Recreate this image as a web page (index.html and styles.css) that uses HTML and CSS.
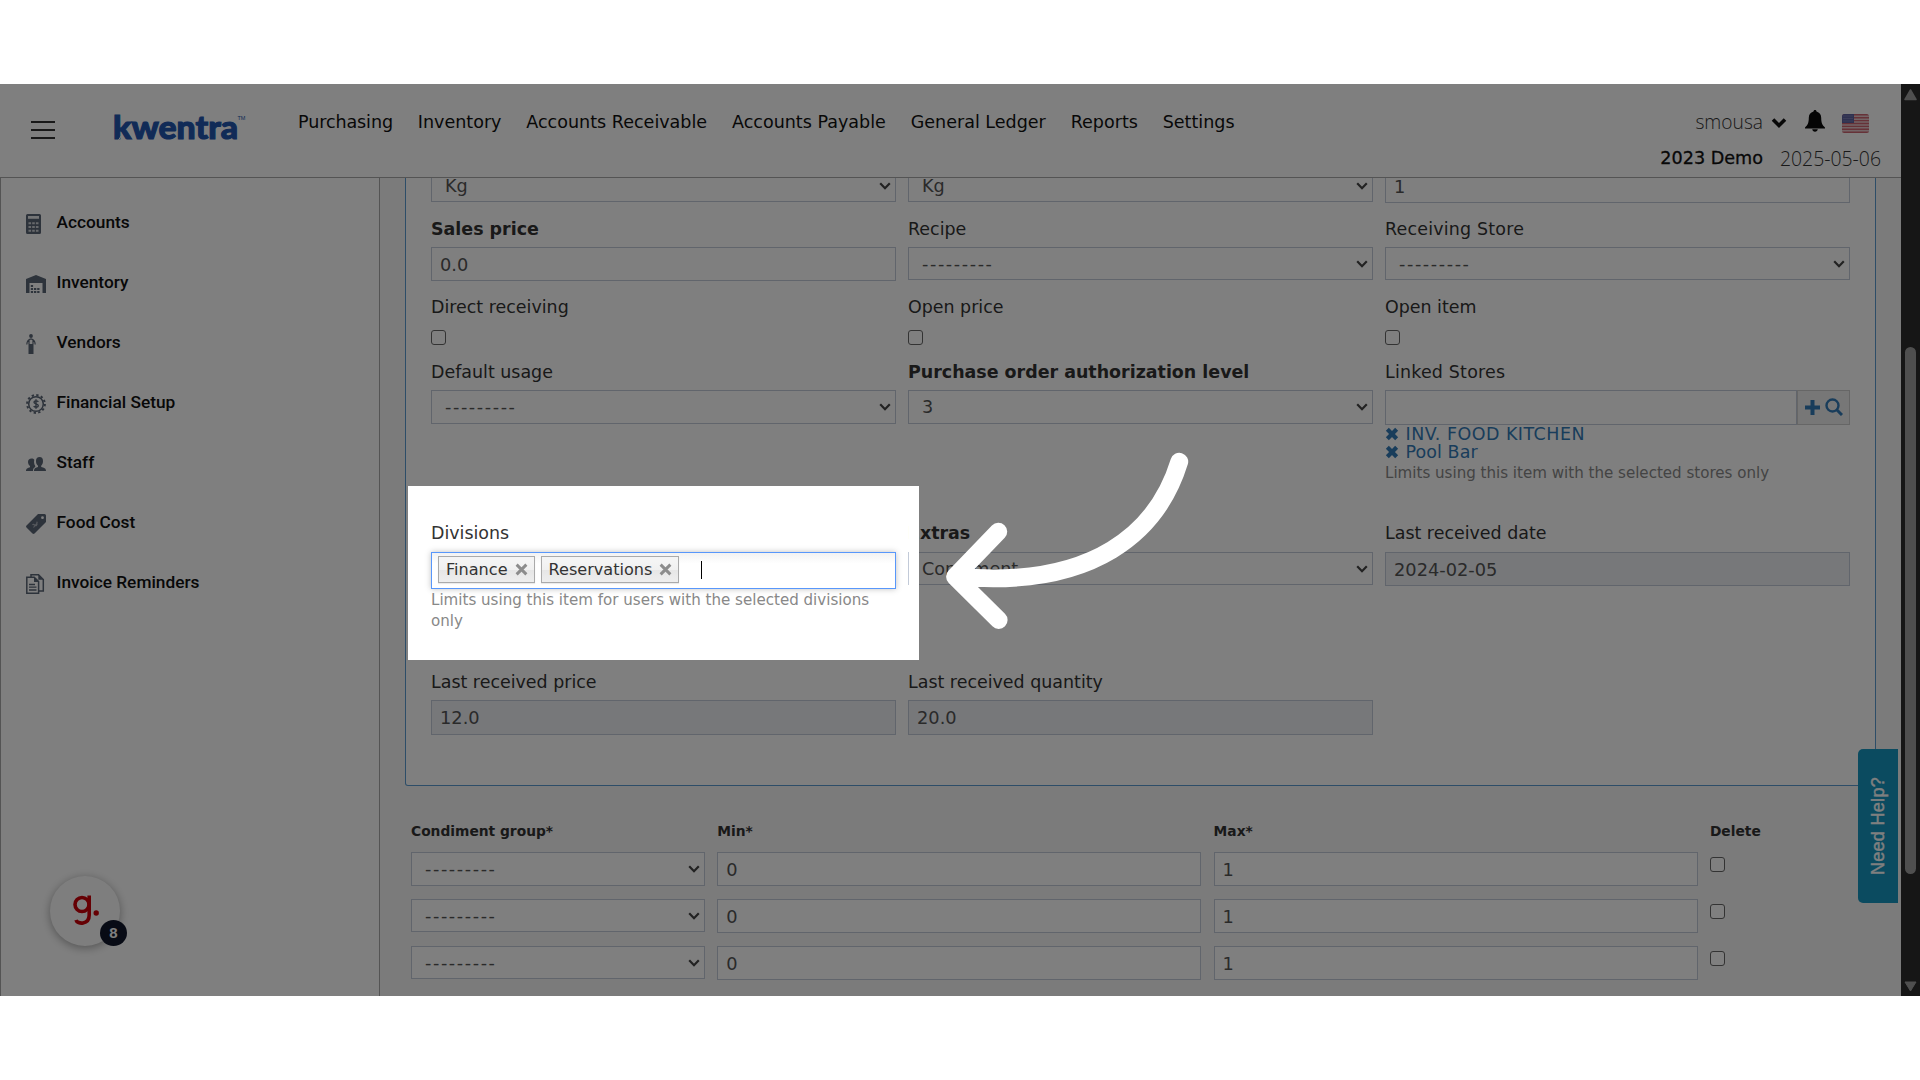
FILE: index.html
```html
<!DOCTYPE html>
<html lang="en">
<head>
<meta charset="utf-8">
<title>Kwentra</title>
<link rel="stylesheet" href="styles.css">
</head>
<body>
<svg class="defs" width="0" height="0">
  <symbol id="chev" viewBox="0 0 12 8"><path d="M1.2 1.2 6 6.2l4.800-5" fill="none" stroke="currentColor" stroke-width="2.2"/></symbol>
  <symbol id="cross" viewBox="0 0 12 12"><path d="M2 2l8 8M10 2l-8 8" fill="none" stroke="currentColor" stroke-width="3.600"/></symbol>
  <symbol id="x" viewBox="0 0 12 12"><path d="M1.500 1.500l9 9M10.500 1.500l-9 9" fill="none" stroke="currentColor" stroke-width="2.700"/></symbol>
</svg>
<div class="app">
  <div class="page">
    <header class="header">
      <div class="burger"><i></i><i></i><i></i></div>
      <svg class="logo" width="136" height="32" viewBox="0 0 136 32">
        <text class="logo-word" x="0" y="26" textLength="125" lengthAdjust="spacingAndGlyphs">kwentra</text>
        <text class="logo-tm" x="124.500" y="7">TM</text>
        <path d="M5.500 27 8.500 22.500 11.500 27" fill="none" stroke="#fff" stroke-width="1"/>
      </svg>
      <nav class="nav">
        <a class="tight">Purchasing</a><a>Inventory</a><a>Accounts Receivable</a><a>Accounts Payable</a><a>General Ledger</a><a>Reports</a><a>Settings</a>
      </nav>
      <div class="account">
        <div class="account-row">
          <span class="thin user">smousa</span>
          <svg class="user-chev" width="16" height="12" viewBox="0 0 16 12"><path d="M2 2.500 8 8.500l6-6" fill="none" stroke="#111" stroke-width="3.600"/></svg>
          <svg class="bell" width="20" height="22" viewBox="0 0 20 22"><path d="M10 0c1 0 1.500.7 1.500 1.600 3 .8 4.700 3.200 4.700 6.200 0 5 1.200 7.500 3.800 9.700v1H0v-1c2.600-2.200 3.800-4.700 3.800-9.700 0-3 1.700-5.400 4.700-6.200C8.500.7 9 0 10 0zM7.200 19.200h5.600C12.600 20.800 11.500 21.700 10 21.700s-2.600-.9-2.800-2.500z" fill="#0b0b0b"/></svg>
          <svg class="flag" width="27" height="19" viewBox="0 0 27 19"><defs><clipPath id="fc"><rect width="27" height="19" rx="2.500"/></clipPath></defs><g clip-path="url(#fc)"><rect width="27" height="19" fill="#e6c8cc"/><path d="M0 .7h27M0 3.700h27M0 6.600h27M0 9.500h27M0 12.400h27M0 15.300h27M0 18.300h27" stroke="#cc6571" stroke-width="1.400"/><rect width="12" height="9" fill="#5e62a0"/><path d="M1.500 2h10M1.500 4.500h10M1.500 7h10" stroke="#9296c4" stroke-width="1" stroke-dasharray="1 1"/></g></svg>
        </div>
        <div class="account-row second"><span class="demo">2023 Demo</span><span class="thin date">2025-05-06</span></div>
      </div>
    </header>
    <div class="body">
      <aside class="side">
        <a class="side-item"><svg width="20" height="20" viewBox="0 0 20 20"><path d="M1.500 0h12A1.500 1.500 0 0 1 15 1.500v17a1.500 1.500 0 0 1-1.500 1.500h-12A1.500 1.500 0 0 1 0 18.500v-17A1.500 1.500 0 0 1 1.500 0z" fill="#5b6676"/><path d="M2 2h11v2.800H2z" fill="#e8eaec"/><path d="M2.500 9.200h10M2.500 13h10M2.500 16.700h10" stroke="#cfd3d8" stroke-width="2" stroke-dasharray="2.600 1.100"/></svg><span>Accounts</span></a>
        <a class="side-item"><svg width="20" height="20" viewBox="0 0 20 20"><path d="M0 19V5L10 1l10 4v14h-3.500V9H3.500v10z" fill="#5b6676"/><path d="M4.800 12h3M4.800 15h8.800M4.800 18h8.800" stroke="#5b6676" stroke-width="2.200" stroke-dasharray="2.300 .9"/></svg><span>Inventory</span></a>
        <a class="side-item"><svg width="20" height="20" viewBox="0 0 20 20"><circle cx="5" cy="2" r="1.900" fill="#5b6676"/><path d="M2.500 10h5v10h-5z" fill="#5b6676"/><path d="M5 4.800C2 5.300 1 7 .8 10.500M5 4.800C8 5.300 9 7 9.200 10.500M3 6v4M7 6v4" fill="none" stroke="#5b6676" stroke-width="1.200"/></svg><span>Vendors</span></a>
        <a class="side-item"><svg width="20" height="20" viewBox="0 0 20 20"><circle cx="10" cy="10" r="7.300" fill="none" stroke="#5b6676" stroke-width="1.500"/><circle cx="10" cy="10" r="8.900" fill="none" stroke="#5b6676" stroke-width="2" stroke-dasharray="2.300 2.360"/><path d="M12.300 7.800C11.500 6.500 8 6.500 8 8.300s4.300 1.500 4.300 3.400-3.600 2-4.600.4M10 5.300v9.400" fill="none" stroke="#5b6676" stroke-width="1.400"/></svg><span>Financial Setup</span></a>
        <a class="side-item"><svg width="20" height="20" viewBox="0 0 20 20"><path d="M7 17H0c0-2.800 2-3 4-3.800V12C2.700 11 2 9.500 2 8c0-2 1.300-3.500 3.500-3.500 1.300 0 2.300.5 2.800 1.200-.5 2-.3 4.300.9 6v1.200C7.500 13.700 7 15 7 17z" fill="#5b6676"/><path d="M8 17c0-3 2-3.400 4-4v-1.300C10.500 10.500 10 9 10 7c0-2.500 1.300-4 3.600-4S17 4.500 17 7c0 2-.6 3.500-1.800 4.700V13c2.500.7 4.800 1 4.800 4z" fill="#5b6676"/></svg><span>Staff</span></a>
        <a class="side-item"><svg width="20" height="20" viewBox="0 0 20 20"><path fill-rule="evenodd" d="M12 0h6.500A1.500 1.500 0 0 1 20 1.500V8L8.500 19.500a1.500 1.500 0 0 1-2 0l-6-6a1.500 1.500 0 0 1 0-2zm4.500 2.300a1.400 1.400 0 1 0 0 2.800 1.400 1.400 0 0 0 0-2.800z" fill="#5b6676"/><path d="M6.500 11c1.500-2 2.500 1.800 4 .3s-.5-3 .8-3.500M7.500 13.500l4-5" stroke="#aab0b8" fill="none" stroke-width="1.200"/></svg><span>Food Cost</span></a>
        <a class="side-item"><svg width="20" height="20" viewBox="0 0 20 20"><path d="M5 3V.800h7.500L17.300 5.500V17H13" fill="none" stroke="#5b6676" stroke-width="1.500"/><path d="M.8 3.200h7.400L12.600 7.500v11.700H.8z" fill="none" stroke="#5b6676" stroke-width="1.500"/><path d="M8 3v5h4.800zM12.300.8v5h5z" fill="#5b6676"/><path d="M3 10.500h6M3 13.200h7.500M3 16h7.500" stroke="#5b6676" stroke-width="1.300"/></svg><span>Invoice Reminders</span></a>
      </aside>
      <main class="main">
        <section class="panel">
          <div class="field first"><div class="ctl sel short">Kg<svg><use href="#chev"/></svg></div></div>
          <div class="field first"><div class="ctl sel short">Kg<svg><use href="#chev"/></svg></div></div>
          <div class="field first"><div class="ctl">1</div></div>

          <div class="field"><label class="b">Sales price</label><div class="ctl">0.0</div></div>
          <div class="field"><label>Recipe</label><div class="ctl sel short"><span class="none">---------</span><svg><use href="#chev"/></svg></div></div>
          <div class="field"><label class="wide">Receiving Store</label><div class="ctl sel short"><span class="none">---------</span><svg><use href="#chev"/></svg></div></div>

          <div class="field"><label>Direct receiving</label><div class="check"></div></div>
          <div class="field"><label>Open price</label><div class="check"></div></div>
          <div class="field"><label>Open item</label><div class="check"></div></div>

          <div class="field"><label>Default usage</label><div class="ctl sel"><span class="none">---------</span><svg><use href="#chev"/></svg></div></div>
          <div class="field"><label class="b">Purchase order authorization level</label><div class="ctl sel">3<svg><use href="#chev"/></svg></div></div>
          <div class="field"><label class="wide">Linked Stores</label>
            <div class="group"><div class="ctl"></div><div class="addon">
              <svg width="15" height="15" viewBox="0 0 15 15"><path d="M7.500 0v15M0 7.500h15" stroke="#337ab7" stroke-width="4"/></svg>
              <svg width="18" height="18" viewBox="0 0 18 18"><circle cx="7.500" cy="7.500" r="6" fill="none" stroke="#337ab7" stroke-width="2.400"/><path d="M12 12l5 5" stroke="#337ab7" stroke-width="3"/></svg>
            </div></div>
            <a class="store caps"><svg><use href="#cross"/></svg>INV. FOOD KITCHEN</a>
            <a class="store"><svg><use href="#cross"/></svg>Pool Bar</a>
            <p class="help one">Limits using this item with the selected stores only</p>
          </div>

          <div class="field low"><label>Divisions</label>
            <div class="chosen"><span class="chip">Finance<svg><use href="#x"/></svg></span><span class="chip">Reservations<svg><use href="#x"/></svg></span><i class="caret"></i></div>
            <p class="help">Limits using this item for users with the selected divisions only</p>
          </div>
          <div class="field low"><label class="b">Extras</label><div class="ctl sel short">Condiment<svg><use href="#chev"/></svg></div></div>
          <div class="field low"><label>Last received date</label><div class="ctl ro">2024-02-05</div></div>

          <div class="field"><label>Last received price</label><div class="ctl ro tall">12.0</div></div>
          <div class="field"><label>Last received quantity</label><div class="ctl ro tall">20.0</div></div>
        </section>
        <section class="table">
          <b>Condiment group*</b><b>Min*</b><b>Max*</b><b>Delete</b>
          <div class="ctl sel"><span class="none">---------</span><svg><use href="#chev"/></svg></div><div class="ctl">0</div><div class="ctl">1</div><div class="check"></div>
          <div class="ctl sel short"><span class="none">---------</span><svg><use href="#chev"/></svg></div><div class="ctl">0</div><div class="ctl">1</div><div class="check"></div>
          <div class="ctl sel short"><span class="none">---------</span><svg><use href="#chev"/></svg></div><div class="ctl">0</div><div class="ctl">1</div><div class="check"></div>
        </section>
      </main>
    </div>
  </div>
  <div class="scroll"><svg class="up" width="13" height="12" viewBox="0 0 13 12"><path d="M6.500 1 12 10.500H1z" fill="#9f9f9f" stroke="#9f9f9f" stroke-width="1.500" stroke-linejoin="round"/></svg><i class="thumb"></i><svg class="down" width="13" height="11" viewBox="0 0 13 11"><path d="M6.500 10 12 1H1z" fill="#9f9f9f" stroke="#9f9f9f" stroke-width="1" stroke-linejoin="round"/></svg></div>
  <div class="help-tab"><span>Need Help?</span></div>
  <div class="guide"><svg width="28" height="34" viewBox="0 0 28 34"><circle cx="9" cy="10.500" r="7" fill="none" stroke="#cc0008" stroke-width="3.600"/><path d="M16.200 1.500V21c0 10-12 9.500-13.200 5" fill="none" stroke="#cc0008" stroke-width="3.600"/><circle cx="23.200" cy="19" r="2.700" fill="#cc0008"/></svg><span class="badge">8</span></div>
  <div class="spotlight"></div>
  <svg class="arrow" width="260" height="200" viewBox="940 440 260 200"><path d="M1179.300 461.700C1158 531 1095 589 957 576.700M998.300 531.700 955 576.700 998.700 620" fill="none" stroke="#fff" stroke-width="17.800" stroke-linecap="round" stroke-linejoin="round"/></svg>
</div>
</body>
</html>
```
FILE: styles.css
```css
* { box-sizing: border-box; }
body { margin: 0; background: #fff; font-family: "DejaVu Sans", Verdana, sans-serif; font-size: 17.45px; color: #333; }
.defs { position: absolute; }
.app { position: relative; display: flex; width: 1920px; height: 912px; margin-top: 84px; overflow: hidden; }
.page { display: flex; flex-direction: column; width: 1901px; height: 912px; }

.header { display: flex; align-items: flex-start; height: 94px; flex: none; border-bottom: 1px solid #a8a8a8; background: #fff; padding-left: 31px; }
.burger { display: flex; flex-direction: column; gap: 6px; width: 24px; margin-top: 36.500px; }
.burger i { height: 2px; background: #333; }
.logo { margin: 28.500px 0 0 58px; overflow: visible; }
.logo-word { font: 900 33px Lato, sans-serif; fill: #2256ae; stroke: #2256ae; stroke-width: 1.1px; }
.logo-tm { font: 5.500px "Liberation Sans", sans-serif; fill: #2256ae; }
.nav { display: flex; gap: 24.800px; margin: 25px 0 0 49px; line-height: 26px; font-size: 17.550px; color: #111; white-space: nowrap; }
.nav .tight { letter-spacing: -.1px; }
.account { margin-left: auto; padding-right: 20px; display: flex; flex-direction: column; align-items: flex-end; }
.account-row { display: flex; align-items: center; height: 26px; margin-top: 25px; padding-right: 12px; }
.account-row.second { margin-top: 10px; padding-right: 0; gap: 17px; }
.thin { font-family: "Open Sans", sans-serif; font-weight: 300; font-size: 19.400px; color: #333; }
.user { margin-top: -2px; font-size: 19.200px; }
.user-chev { margin: 2px 18px 0 8px; }
.bell { margin: -2px 17px 0 0; }
.flag { margin-top: 3px; }
.demo { color: #111; font-size: 17.600px; -webkit-text-stroke: .3px #111; }

.body { display: flex; flex: 1; min-height: 0; }
.side { width: 380px; flex: none; border-left: 1px solid #a8a8a8; border-right: 1px solid #a8a8a8; padding: 15px 0 0 25px; }
.side-item { display: flex; align-items: center; gap: 10.500px; height: 60px; font: 500 17.300px Roboto, sans-serif; color: #111; }
.side-item svg { margin-top: 1px; }
.side-item span { margin-top: -3px; }

.main { flex: 1; background: #f6f6f6; overflow: hidden; padding-left: 25px; }
.panel { display: grid; grid-template-columns: repeat(3, 465px); column-gap: 12px; grid-template-rows: 78px 78px 65px 161px 149px 116px; width: 1471px; margin-top: -40px; padding-left: 25px; background: #fff; border: 1px solid #5a9bd0; border-top: 0; border-radius: 0 0 3px 3px; height: 648px; }
.field { display: flex; flex-direction: column; min-width: 0; }
.field.first { padding-top: 31px; }
label { height: 26px; line-height: 26px; margin-bottom: 5px; color: #333; white-space: nowrap; }
label.b { font-weight: 700; }
label.wide { letter-spacing: .2px; }
.low label { margin-bottom: 6px; }
.ctl { position: relative; display: flex; align-items: center; flex: none; height: 34px; padding: 0 8px; border: 1px solid #c2cad8; background: #fff; color: #555; font-size: 17.800px; }
.ctl.sel { padding-left: 13px; font-size: 17.600px; }
.ctl.sel svg { width: 12px; height: 8px; margin-left: auto; margin-right: -4px; color: #444; }
.ctl.short { height: 33px; }
.ctl.tall { height: 35px; }
.ctl.ro { background: #eef1f5; }
.none { letter-spacing: 1.600px; }
.check { width: 15px; height: 15px; margin-top: 5px; border: 1.500px solid #666; border-radius: 3px; background: #fff; }
.group { display: flex; }
.group .ctl { flex: 1; height: 35px; }
.addon { display: flex; align-items: center; justify-content: center; gap: 5px; width: 53px; border: 1px solid #ccc; background: #eee; padding-bottom: 1px; }
.store { display: flex; align-items: center; gap: 6.500px; height: 18px; line-height: 18px; color: #337ab7; letter-spacing: .1px; }
.store.caps { letter-spacing: .5px; }
.store svg { width: 14px; height: 14px; }
.help { margin: 1px 0 0; font-size: 15.080px; line-height: 21px; color: #888; }
.help.one { margin-top: 2px; }
.chosen { display: flex; align-items: flex-start; flex: none; height: 37px; padding: 3px 6px; border: 1px solid #5897fb; background: linear-gradient(#f2f2f2, #fff 30%); box-shadow: 0 0 6px rgba(0,0,0,.25); }
.chip { display: flex; align-items: center; gap: 7px; height: 27px; margin-right: 6px; padding: 0 6px 0 7px; border: 1px solid #aaa; background: linear-gradient(#f4f4f4 20%, #f0f0f0 50%, #e6e6e6 52%, #eee); color: #333; font-size: 16.100px; box-shadow: 0 1px 1px rgba(0,0,0,.08); }
.chip svg { width: 13px; height: 13px; color: #8c8c8c; }
.caret { width: 1px; height: 18px; margin: 5px 0 0 16px; background: #000; }

.table { display: grid; grid-template-columns: 294px 484px 484px 60px; column-gap: 12.300px; grid-template-rows: 36px 47px 47px 47px; margin: 30px 0 0 6px; font-size: 13.800px; }
.table b { line-height: 30px; }

.scroll { position: relative; width: 19px; background: #2c2c2c; }
.scroll .up { position: absolute; left: 3px; top: 5px; }
.scroll .down { position: absolute; left: 3px; bottom: 4px; }
.thumb { position: absolute; left: 4px; top: 263px; width: 11px; height: 527px; border-radius: 6px; background: #9f9f9f; }
.help-tab { position: absolute; left: 1858px; top: 665px; width: 40px; height: 154px; display: flex; align-items: center; justify-content: center; background: #1696c0; border-radius: 5px 0 0 5px; }
.help-tab span { writing-mode: vertical-rl; transform: rotate(180deg); font: 500 18px "Liberation Sans", sans-serif; color: #fff; -webkit-text-stroke: .4px #fff; letter-spacing: .3px; }
.guide { position: absolute; left: 50px; top: 792px; width: 70px; height: 70px; display: flex; align-items: center; justify-content: center; border-radius: 50%; background: #fdfdfd; box-shadow: 0 2px 10px rgba(0,0,0,.35); }
.guide svg { margin-left: 4px; }
.badge { position: absolute; left: 50px; top: 44px; width: 27px; height: 26px; border-radius: 50%; background: #10162a; color: #fff; font: 700 15px/26px "Liberation Sans", sans-serif; text-align: center; }
.spotlight { position: absolute; left: 408px; top: 402px; width: 511px; height: 174px; box-shadow: 0 0 0 2000px rgba(0,0,0,.5); }
.spotlight::after { content: ""; position: absolute; right: 0; top: 0; width: 10px; height: 100%; background: #fff; }
.arrow { position: absolute; left: 940px; top: 356px; }
```
